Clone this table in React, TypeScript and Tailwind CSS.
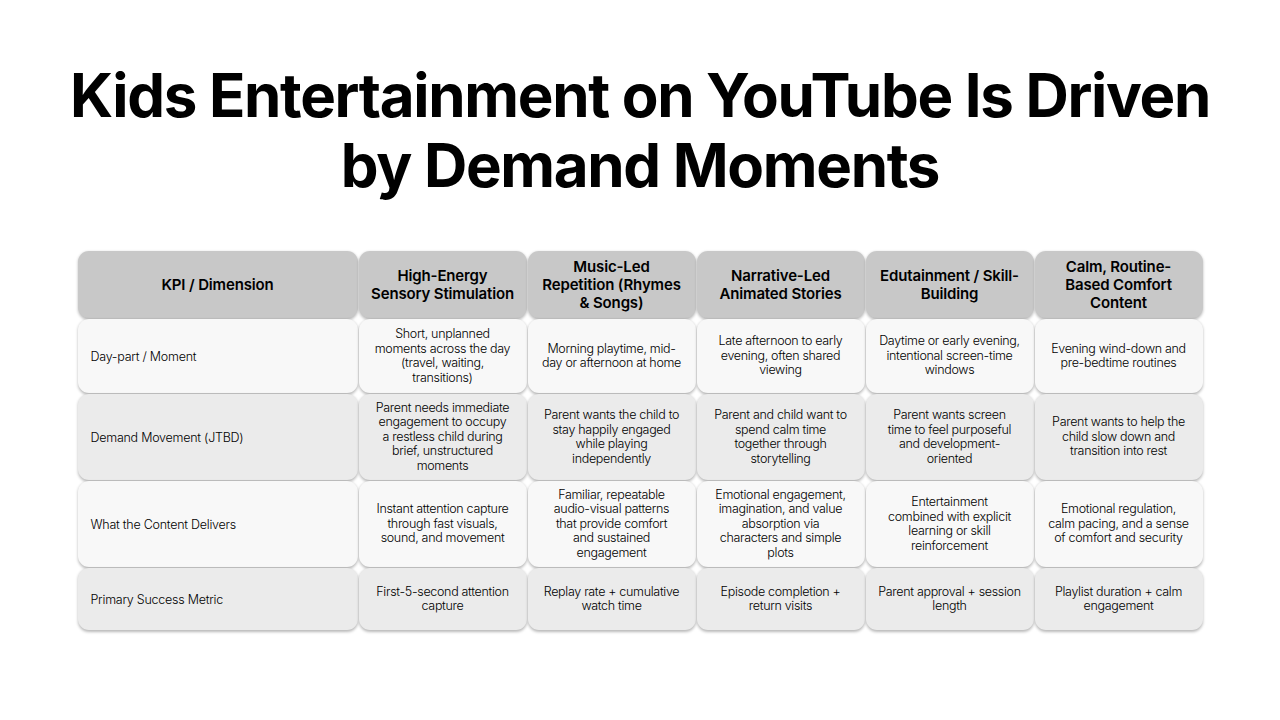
const headers = [
  "KPI / Dimension",
  "High-Energy\nSensory Stimulation",
  "Music-Led\nRepetition (Rhymes\n& Songs)",
  "Narrative-Led\nAnimated Stories",
  "Edutainment / Skill-\nBuilding",
  "Calm, Routine-\nBased Comfort\nContent",
];

const rows: { label: string; cells: string[]; bg: string; h: string }[] = [
  {
    label: "Day-part / Moment",
    bg: "bg-[#f8f8f8]",
    h: "h-[74px]",
    cells: [
      "Short, unplanned\nmoments across the day\n(travel, waiting,\ntransitions)",
      "Morning playtime, mid-\nday or afternoon at home",
      "Late afternoon to early\nevening, often shared\nviewing",
      "Daytime or early evening,\nintentional screen-time\nwindows",
      "Evening wind-down and\npre-bedtime routines",
    ],
  },
  {
    label: "Demand Movement (JTBD)",
    bg: "bg-[#ebebeb]",
    h: "h-[86px]",
    cells: [
      "Parent needs immediate\nengagement to occupy\na restless child during\nbrief, unstructured\nmoments",
      "Parent wants the child to\nstay happily engaged\nwhile playing\nindependently",
      "Parent and child want to\nspend calm time\ntogether through\nstorytelling",
      "Parent wants screen\ntime to feel purposeful\nand development-\noriented",
      "Parent wants to help the\nchild slow down and\ntransition into rest",
    ],
  },
  {
    label: "What the Content Delivers",
    bg: "bg-[#f8f8f8]",
    h: "h-[86px]",
    cells: [
      "Instant attention capture\nthrough fast visuals,\nsound, and movement",
      "Familiar, repeatable\naudio-visual patterns\nthat provide comfort\nand sustained\nengagement",
      "Emotional engagement,\nimagination, and value\nabsorption via\ncharacters and simple\nplots",
      "Entertainment\ncombined with explicit\nlearning or skill\nreinforcement",
      "Emotional regulation,\ncalm pacing, and a sense\nof comfort and security",
    ],
  },
  {
    label: "Primary Success Metric",
    bg: "bg-[#ebebeb]",
    h: "h-[62px]",
    cells: [
      "First-5-second attention\ncapture",
      "Replay rate + cumulative\nwatch time",
      "Episode completion +\nreturn visits",
      "Parent approval + session\nlength",
      "Playlist duration + calm\nengagement",
    ],
  },
];

const cell =
  "flex items-center rounded-[11px] shadow-[0_1.5px_3px_rgba(0,0,0,0.28)] whitespace-pre-line";

export default function App() {
  return (
    <div className="flex h-[720px] w-[1280px] flex-col items-center bg-white font-['Inter',sans-serif] text-black">
      <h1 className="mt-[60px] text-center text-[60px] font-bold leading-[70px] tracking-[-0.022em]">
        Kids Entertainment on YouTube Is Driven
        <br />
        by Demand Moments
      </h1>
      <div className="mt-[51px] grid grid-cols-[280px_repeat(5,168px)] gap-[1px]">
        {headers.map((h) => (
          <div
            key={h}
            className={`${cell} h-[67px] justify-center bg-[#c8c8c8] px-[4px] text-center text-[15px] font-semibold leading-[18px] tracking-[-0.01em]`}
          >
            {h}
          </div>
        ))}
        {rows.map((r) => (
          <div key={r.label} className="contents">
            <div
              className={`${cell} ${r.h} ${r.bg} pl-[13px] text-[12.5px] font-light leading-[15px] tracking-[-0.02em]`}
            >
              {r.label}
            </div>
            {r.cells.map((c, i) => (
              <div
                key={i}
                className={`${cell} ${r.h} ${r.bg} justify-center px-[3px] text-center text-[12.5px] font-light leading-[14.5px] tracking-[-0.025em]`}
              >
                {c}
              </div>
            ))}
          </div>
        ))}
      </div>
    </div>
  );
}
